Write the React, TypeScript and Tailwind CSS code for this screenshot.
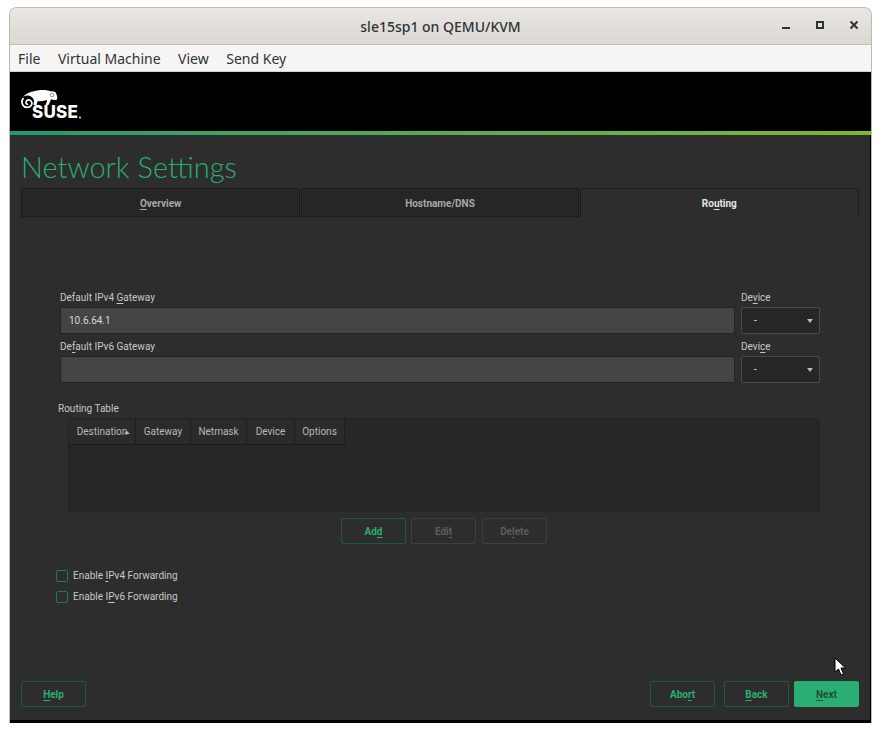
import type { ReactNode } from "react";

const M = ({ children }: { children: ReactNode }) => (
  <span className="underline underline-offset-2 decoration-1">{children}</span>
);

const Suse = () => (
  <svg width="62" height="34" viewBox="0 0 62 34" className="block">
    {/* chameleon */}
    <path
      fill="#fff"
      d="M2 8C6 3 15 1 22 1c3 0 6 .6 8 1.400 3-.4 5 1 5.500 3 .8 1.600 1 3.400.5 5-2 .8-4 .6-6-.2l-1 2.800-1.500 3h-3l1.500-3.500-.5-1.500c-3 1.200-6 1.500-9 1.200l-1 3.800h-3l.5-4.500c-.5-1.500-1.500-3-3-4-2-1.500-5-1.500-8 .5z"
    />
    <path
      fill="none"
      stroke="#fff"
      strokeWidth="1.700"
      d="M2.500 9C.8 11 .6 14 2 16.200c1.800 2.800 6 3 8 .6 1.600-2 1-5-1.400-5.800-1.800-.6-3.600.6-3.600 2.400 0 1.200 1 2 2 1.800"
    />
    <circle cx="31" cy="6" r="1.800" fill="none" stroke="#666" strokeWidth="0.700" />
    <text x="11" y="29" fill="#fff" fontFamily="Inter, sans-serif" fontWeight="800" fontSize="17" letterSpacing="0.2">
      SUSE
    </text>
    <circle cx="59" cy="28.500" r="0.900" fill="#fff" />
  </svg>
);

const Btn = ({ children, tone = "green", className = "" }: { children: ReactNode; tone?: "green" | "off" | "solid"; className?: string }) => {
  const look =
    tone === "solid"
      ? "bg-[#2bae74] border-[#2bae74] text-[#1f4d39]"
      : tone === "off"
        ? "border-[#3f3f3f] text-[#5e5e5e]"
        : "border-[#1e5a43] text-[#2bae74]";
  return (
    <div className={`w-[65px] h-[26px] rounded-[2px] border flex items-center justify-center text-[10px] font-bold ${look} ${className}`}>
      {children}
    </div>
  );
};

const Select = () => (
  <div className="w-[79px] h-[27px] rounded-[2px] border border-[#4a4a4a] bg-[#262626] flex items-center justify-between pl-[12px] pr-[6px] text-[#eee] text-[10px]">
    <span>-</span>
    <span className="w-0 h-0 border-x-[3px] border-x-transparent border-t-[4px] border-t-[#bbb]" />
  </div>
);

const Input = ({ value = "" }: { value?: string }) => (
  <div className="w-[675px] h-[27px] rounded-[2px] border border-[#232323] bg-[#444444] flex items-center pl-[8px] text-[#d8d8d8] text-[10px]">
    {value}
  </div>
);

const Col = ({ children, className = "" }: { children: ReactNode; className?: string }) => (
  <div className={`h-[26px] flex items-center justify-center border-r border-b border-[#1e1e1e] bg-[#2b2b2b] text-[#b8b8b8] ${className}`}>
    {children}
  </div>
);

const Check = ({ children }: { children: ReactNode }) => (
  <div className="h-[21px] flex items-center gap-[5px]">
    <span className="w-[12px] h-[12px] rounded-[2px] border border-[#1f7a58]" />
    <span>{children}</span>
  </div>
);

export default function App() {
  return (
    <div className="w-[881px] h-[731px] bg-white pt-[7px] pl-[9px] font-['Roboto',sans-serif] overflow-hidden">
      <div className="relative w-[863px] h-[716px] rounded-t-[8px] border-x border-t border-[#bdbab5] overflow-hidden flex flex-col">
        {/* window title */}
        <div className="h-[37px] shrink-0 bg-gradient-to-b from-[#e9e6e3] to-[#dcd8d4] border-b border-[#c2bdb7] relative flex items-center justify-center text-[14px] font-medium text-[#2e3436] font-['Noto_Sans',sans-serif]">
          sle15sp1 on QEMU/KVM
          <div className="absolute right-0 top-0 h-full flex items-center">
            <svg width="120" height="36" viewBox="0 0 120 36" className="block">
              <rect x="31" y="19" width="8" height="2" fill="#2e3436" />
              <rect x="66" y="14" width="6" height="6" fill="none" stroke="#2e3436" strokeWidth="2" />
              <path d="M99.500 13.500l7 7M106.500 13.500l-7 7" stroke="#2e3436" strokeWidth="2" />
            </svg>
          </div>
        </div>
        {/* menu bar */}
        <div className="h-[27px] shrink-0 bg-[#f6f5f4] border-b border-[#d5d1cc] flex items-center gap-[17.5px] pl-[8px] text-[14px] text-[#2e3436] font-['Noto_Sans',sans-serif]">
          <span>File</span>
          <span>Virtual Machine</span>
          <span>View</span>
          <span>Send Key</span>
        </div>
        {/* installer banner */}
        <div className="h-[59px] shrink-0 bg-black pl-[11px] pt-[17px]">
          <Suse />
        </div>
        <div className="h-[4px] shrink-0 bg-gradient-to-r from-[#1f9a6d] to-[#7fb82c]" />
        {/* page */}
        <div className="flex-1 bg-[#2d2d2d] border-r border-b-[3px] border-black text-[10px] text-[#c8c8c8] flex flex-col px-[11px]">
          <h1 className="mt-[15px] h-[38px] leading-[34px] text-[29px] font-light text-[#2bae74] font-['Lato',sans-serif]">
            Network Settings
          </h1>
          <div className="h-[29px] flex text-[10px] font-bold">
            <div className="w-[280px] pt-px flex items-center justify-center rounded-t-[2px] border border-[#1c1c1c] bg-[#262626] text-[#a8a8a8]">
              <span><M>O</M>verview</span>
            </div>
            <div className="ml-px w-[278px] pt-px flex items-center justify-center rounded-t-[2px] border border-[#1c1c1c] bg-[#262626] text-[#a8a8a8]">
              Hostname/DNS
            </div>
            <div className="w-[280px] ml-px pt-px flex items-center justify-center rounded-t-[2px] border border-[#1c1c1c] border-b-transparent text-[#e4e4e4]">
              <span>Ro<M>u</M>ting</span>
            </div>
          </div>
          {/* gateways */}
          <div className="mt-[73px] ml-[39px] grid grid-cols-[675px_79px] gap-x-[6px]">
            <div className="h-[17px] leading-[16px]">Default IPv4 <M>G</M>ateway</div>
            <div className="h-[17px] leading-[16px]">De<M>v</M>ice</div>
            <Input value="10.6.64.1" />
            <Select />
            <div className="h-[22px] pt-[5px] leading-[16px]">De<M>f</M>ault IPv6 Gateway</div>
            <div className="h-[22px] pt-[5px] leading-[16px]">Devi<M>c</M>e</div>
            <Input />
            <Select />
          </div>
          {/* routing table */}
          <div className="mt-[18px] ml-[37px] h-[17px] leading-[16px]">Routing Table</div>
          <div className="ml-[47px] w-[752px] h-[94px] rounded-[3px] border border-[#232323] bg-[#272727] flex items-start">
            <Col className="w-[67px] relative">
              Destination
              <span className="absolute right-[5px] top-[12px] w-0 h-0 border-x-[3px] border-x-transparent border-b-[3px] border-b-[#b8b8b8]" />
            </Col>
            <Col className="w-[55px]">Gateway</Col>
            <Col className="w-[56px]">Netmask</Col>
            <Col className="w-[48px]">Device</Col>
            <Col className="w-[50px]">Options</Col>
          </div>
          <div className="mt-[6px] ml-[320px] flex gap-[5px]">
            <Btn>Ad<M>d</M></Btn>
            <Btn tone="off">Edi<M>t</M></Btn>
            <Btn tone="off" className="ml-px">De<M>l</M>ete</Btn>
          </div>
          <div className="mt-[21px] ml-[35px]">
            <Check>Enable <M>I</M>Pv4 Forwarding</Check>
            <Check>Enable I<M>P</M>v6 Forwarding</Check>
          </div>
          {/* wizard buttons */}
          <div className="mt-[74px] flex">
            <Btn><M>H</M>elp</Btn>
            <div className="ml-auto flex">
              <Btn className="mr-[9px]">Abo<M>r</M>t</Btn>
              <Btn className="mr-[5px]"><M>B</M>ack</Btn>
              <Btn tone="solid"><M>N</M>ext</Btn>
            </div>
          </div>
        </div>
        {/* mouse pointer */}
        <svg width="14" height="20" viewBox="0 0 14 20" className="absolute left-[824px] top-[649px]">
          <path d="M1 1v14l3.500-3 2.500 6 2.500-1-2.500-6h4.500z" fill="#fff" stroke="#000" strokeWidth="1" />
        </svg>
      </div>
    </div>
  );
}
